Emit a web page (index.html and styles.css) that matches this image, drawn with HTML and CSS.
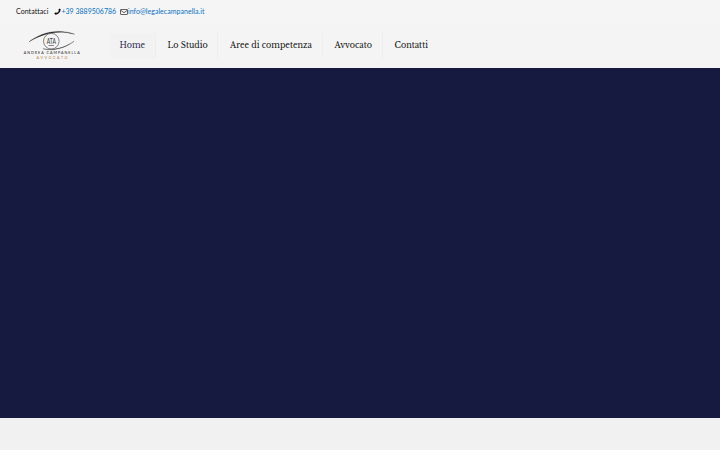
FILE: index.html
```html
<!DOCTYPE html>
<html lang="it">
<head>
  <meta charset="UTF-8">
  <meta name="viewport" content="width=device-width, initial-scale=1.0">
  <title>Andrea Campanella Avvocato</title>
  <link rel="stylesheet" href="styles.css">
</head>
<body>
  <div class="action-bar">
    <span class="contact-label">Contattaci</span>
    <svg class="icon-phone" viewBox="0 0 14 14"><path d="M11.2 1 13.4 2.3C13 8.5 8.5 12.8 2.7 13.4L.5 10.5 4 8.5 5.6 10C7.5 9 8.9 7.5 9.9 5.6L8.4 4.1Z"/></svg>
    <a class="phone" href="tel:+393889506786">+39 3889506786</a>
    <svg class="icon-mail" viewBox="0 0 16 12"><rect x="1" y="1" width="14" height="10" rx="1"/><path d="M1.5 2.5 8 7.5 14.5 2.5"/></svg>
    <a class="mail" href="mailto:info@legalecampanella.it">info@legalecampanella.it</a>
  </div>
  <header class="header">
    <a class="logo" href="#">
      <svg viewBox="0 0 60 32" width="60" height="32">
        <path class="swoosh" d="M7 11.8C17 4 34-2.5 52.5 4.2 35-.8 20 4 7 11.8Z"/>
        <path class="swoosh" d="M21 18.8C32 21.5 43 18 52 11.3 43.5 17.5 32 20.8 21 18.8Z"/>
        <circle class="ring" cx="29.3" cy="11.2" r="7.8"/>
        <text class="initials" x="29.3" y="13.5" textLength="9" lengthAdjust="spacingAndGlyphs">ATA</text>
        <path class="ring" d="M26.5 15.5H32"/>
        <text class="logo-name" x="29.7" y="23.6" textLength="56">ANDREA CAMPANELLA</text>
        <text class="logo-role" x="30" y="29.3" textLength="31">AVVOCATO</text>
      </svg>
    </a>
    <nav class="menu">
      <a class="menu-item active" href="#"><span>Home</span></a>
      <a class="menu-item studio" href="#"><span>Lo Studio</span></a>
      <a class="menu-item aree" href="#"><span>Aree di competenza</span></a>
      <a class="menu-item avvocato" href="#"><span>Avvocato</span></a>
      <a class="menu-item contatti" href="#"><span>Contatti</span></a>
    </nav>
  </header>
  <section class="hero"></section>
</body>
</html>
```
FILE: styles.css
```css
body {
  margin: 0;
  height: 450px;
  overflow: hidden;
  background-color: #f1f1f1;
}
a {
  text-decoration: none;
}
.action-bar {
  display: flex;
  align-items: center;
  height: 23px;
  padding-left: 16px;
  background-color: #f5f5f5;
  font-family: Lato, sans-serif;
  font-size: 7px;
  line-height: 23px;
  color: #111;
  white-space: nowrap;
}
.contact-label {
  width: 37.5px;
  letter-spacing: .06px;
}
.action-bar a {
  color: #0871c0;
}
.icon-phone {
  width: 7px;
  height: 7px;
  margin-right: 1px;
  fill: #111;
}
.phone {
  width: 58.5px;
}
.icon-mail {
  width: 8px;
  height: 6px;
  fill: none;
  stroke: #333;
  stroke-width: 1.5;
}
.mail {
  letter-spacing: .03px;
}
.header {
  display: flex;
  align-items: center;
  height: 45px;
  background-color: #f4f4f4;
}
.logo {
  width: 60px;
  height: 32px;
  margin-left: 22px;
}
.logo svg {
  display: block;
}
.swoosh {
  fill: #222;
  stroke: #222;
  stroke-width: .3;
}
.ring {
  fill: none;
  stroke: #555;
  stroke-width: .7;
}
.logo text {
  text-anchor: middle;
  font-family: Lato, sans-serif;
}
.initials {
  font-size: 7.5px;
  fill: #333;
}
.logo-name {
  font-size: 3.7px;
  fill: #222;
}
.logo-role {
  font-size: 3.7px;
  fill: #b07b3f;
}
.menu {
  display: flex;
  margin-left: 28px;
  font-family: "Libre Baskerville", "Liberation Serif", serif;
  font-size: 8px;
}
.menu-item {
  box-sizing: border-box;
  width: 46px;
  height: 25px;
  padding-left: 9.5px;
  border-right: 1px solid #ededed;
  line-height: 24px;
  color: #111;
  white-space: nowrap;
}
.menu-item span {
  display: inline-block;
  transform: scaleY(1.12);
}
.active {
  background-color: #f2f2f2;
  color: #2b2950;
}
.studio {
  width: 62px;
  padding-left: 11.5px;
}
.aree {
  width: 105px;
  padding-left: 12px;
}
.avvocato {
  width: 60px;
  padding-left: 11.5px;
}
.contatti {
  padding-left: 11.5px;
  border-right: none;
}
.hero {
  height: 350px;
  background-color: #171a40;
}
```
